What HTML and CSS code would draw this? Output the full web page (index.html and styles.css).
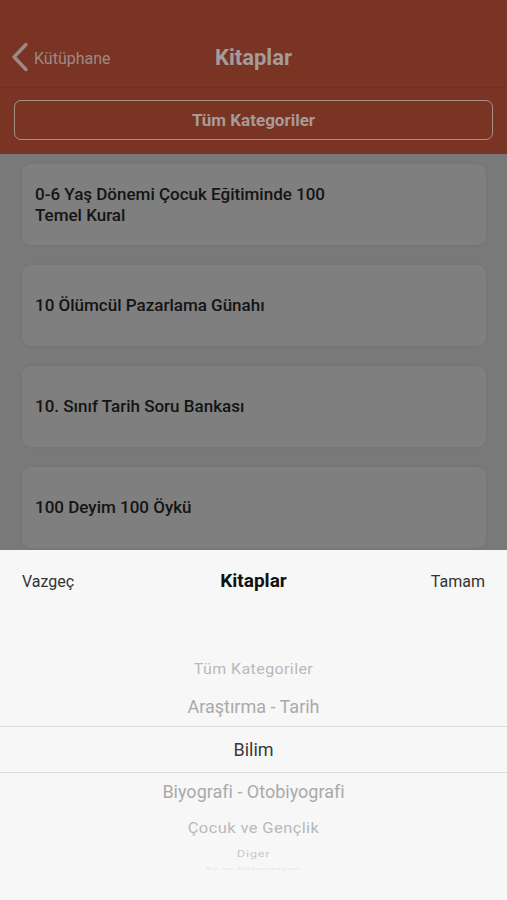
FILE: index.html
```html
<!DOCTYPE html>
<html lang="tr">
<head>
<meta charset="utf-8">
<link rel="stylesheet" href="styles.css">
</head>
<body>
<div class="screen">
  <header class="top">
    <div class="navbar">
      <div class="back">
        <svg class="chev" width="18" height="30" viewBox="0 0 18 30"><path d="M15 2.5 L3 15 L15 27.5" fill="none" stroke="currentColor" stroke-width="3.4" stroke-linecap="round" stroke-linejoin="round"/></svg>
        <span>Kütüphane</span>
      </div>
      <div class="nav-title">Kitaplar</div>
    </div>
    <div class="filter-wrap">
      <div class="filter">Tüm Kategoriler</div>
    </div>
  </header>
  <main class="list">
    <div class="card"><p>0-6 Yaş Dönemi Çocuk Eğitiminde 100<br>Temel Kural</p></div>
    <div class="card"><p>10 Ölümcül Pazarlama Günahı</p></div>
    <div class="card"><p>10. Sınıf Tarih Soru Bankası</p></div>
    <div class="card"><p>100 Deyim 100 Öykü</p></div>
  </main>
  <section class="sheet">
    <div class="sheet-bar">
      <span class="act left">Vazgeç</span>
      <span class="sheet-title">Kitaplar</span>
      <span class="act right">Tamam</span>
    </div>
    <div class="picker">
      <div class="opt o-2">Tüm Kategoriler</div>
      <div class="opt o-1">Araştırma - Tarih</div>
      <div class="opt sel">Bilim</div>
      <div class="opt o-1">Biyografi - Otobiyografi</div>
      <div class="opt o-2 below">Çocuk ve Gençlik</div>
      <div class="opt o-3">Diger</div>
      <div class="opt o-4">Ev ve Dekorasyon</div>
    </div>
  </section>
</div>
</body>
</html>
```

FILE: styles.css
```css
* { box-sizing: border-box; }
html, body { margin: 0; padding: 0; }
body {
  width: 507px;
  height: 900px;
  overflow: hidden;
  font-family: Roboto, "Open Sans", sans-serif;
  background: #7a7a7a;
}
.screen { display: flex; flex-direction: column; height: 900px; }
.top { background: #7a3424; }
.navbar {
  height: 88px;
  position: relative;
  display: flex;
  align-items: flex-end;
  padding: 0 0 15px 11px;
  border-bottom: 1px solid #72301f;
}
.back {
  display: flex;
  align-items: center;
  gap: 5px;
  color: #9c8a86;
  font-size: 16px;
}
.back span { padding-top: 3px; }
.chev { color: #9c8a86; }
.nav-title {
  position: absolute;
  left: 0; right: 0;
  bottom: 17px;
  text-align: center;
  color: #a59c99;
  font-weight: 700;
  font-size: 22px;
}
.filter-wrap { padding: 12px 14px 14px; }
.filter {
  height: 40px;
  border: 1.5px solid #a68e89;
  border-radius: 7px;
  display: flex;
  align-items: center;
  justify-content: center;
  color: #a59c99;
  font-weight: 700;
  font-size: 17px;
}
.list {
  flex: 1;
  padding: 10px 21px 0 22px;
  display: flex;
  flex-direction: column;
  gap: 20px;
  overflow: hidden;
  background: #797979;
}
.card {
  height: 81px;
  flex: none;
  background: #7f7f7f;
  border-radius: 9px;
  display: flex;
  align-items: center;
  padding: 0 13px;
  box-shadow: 0 0 4px rgba(0,0,0,0.05);
}
.card p {
  margin: 0;
  color: #141414;
  font-weight: 500;
  font-size: 17px;
  line-height: 21px;
}
.sheet {
  position: absolute;
  left: 0; right: 0; top: 550px; bottom: 0;
  background: #f7f7f7;
}
.sheet-bar {
  height: 60px;
  display: grid;
  grid-template-columns: 1fr auto 1fr;
  align-items: center;
  padding: 0 22px;
}
.act { color: #333; font-size: 16px; padding-top: 3px; }
.act.right { text-align: right; }
.sheet-title { color: #111; font-weight: 700; font-size: 19px; }
.picker {
  display: flex;
  flex-direction: column;
  align-items: center;
  padding-top: 42px;
}
.opt { text-align: center; color: #a9a9a9; white-space: nowrap; }
.o-2 { font-size: 16px; height: 36px; line-height: 36px; color: #b9b9b9; transform: scaleY(0.9); letter-spacing: 0.4px; }
.o-2.below { height: 34px; line-height: 34px; font-size: 16.5px; }
.o-1 { font-size: 18px; height: 38px; line-height: 38px; color: #aaa; }
.sel {
  align-self: stretch;
  font-size: 18px;
  height: 47px;
  line-height: 45px;
  color: #3a3a3a;
  border-top: 1px solid #dcdcdc;
  border-bottom: 1px solid #dcdcdc;
}
.o-3 { font-size: 13px; height: 18px; line-height: 18px; color: #c8c8c8; transform: scaleY(0.7); letter-spacing: 0.6px; }
.o-4 { font-size: 11px; height: 12px; line-height: 12px; color: #e6e6e6; transform: scaleY(0.4); letter-spacing: 0.6px; }
```
